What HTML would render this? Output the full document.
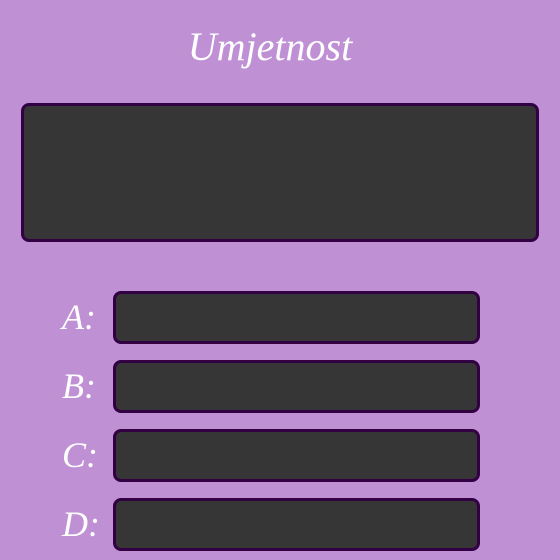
<!DOCTYPE html>
<html><head><style>
body{margin:0;width:560px;height:560px;background:#bf90d4;position:relative;overflow:hidden;font-family:"Liberation Serif",serif;}
.t{position:absolute;left:-10px;width:560px;top:22px;text-align:center;color:#fff;font-size:40px;font-style:italic;line-height:50px;}
.b{position:absolute;background:#363636;border:3px solid #330044;border-radius:8px;box-sizing:border-box;}
.l{position:absolute;left:62px;width:40px;color:#fff;font-size:36px;font-style:italic;line-height:52px;}
</style></head><body>
<div class="t">Umjetnost</div>
<div class="b" style="left:21px;top:103px;width:518px;height:139px"></div>
<div class="l" style="top:291px">A:</div>
<div class="b" style="left:113px;top:291px;width:367px;height:53px"></div>
<div class="l" style="top:360px">B:</div>
<div class="b" style="left:113px;top:360px;width:367px;height:53px"></div>
<div class="l" style="top:429px">C:</div>
<div class="b" style="left:113px;top:429px;width:367px;height:53px"></div>
<div class="l" style="top:498px">D:</div>
<div class="b" style="left:113px;top:498px;width:367px;height:53px"></div>
</body></html>
